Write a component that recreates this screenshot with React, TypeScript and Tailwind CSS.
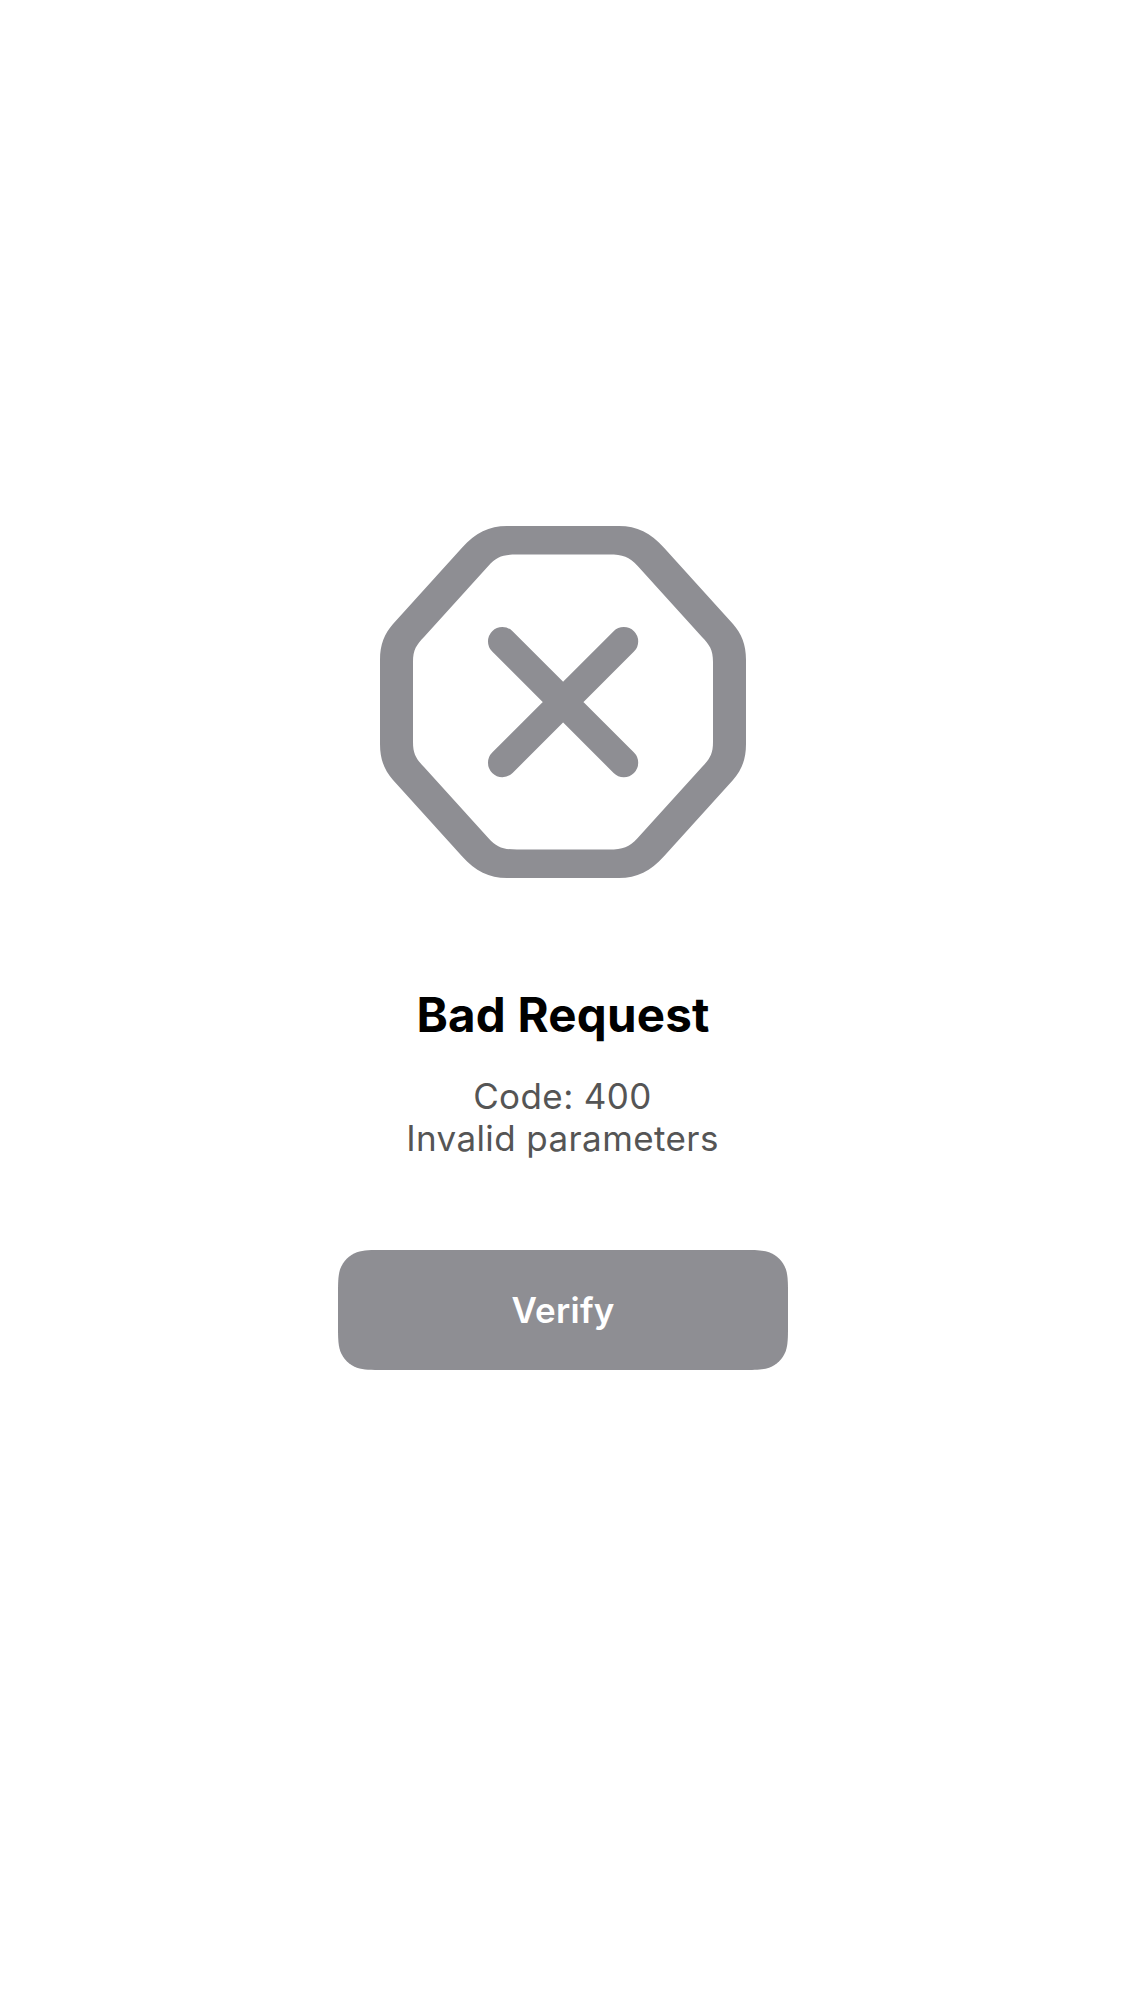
function ErrorIcon() {
  return (
    <svg width="366" height="352" viewBox="380 526 366 352" aria-hidden="true">
      <path
        fill="#8e8e93"
        fillRule="evenodd"
        d="M507 526H619C637 526 650.5 532.8 664 547.7L733 624C741.5 634 746 644 746 660V744C746 760 741.5 770 733 780L664 856.3C650.5 871.2 637 878 619 878H507C489 878 475.5 871.2 462 856.3L393 780C384.5 770 380 760 380 744V660C380 644 384.5 634 393 624L462 547.7C475.5 532.8 489 526 507 526ZM517 554.5C503 554.5 497 556.5 488.3 566L424 637C416.5 645 413 649.5 413 662V742C413 754.5 416.5 759 424 767L488.3 838C497 847.5 503 849.5 517 849.5H609C623 849.5 629 847.5 637.7 838L702 767C709.5 759 713 754.5 713 742V662C713 649.5 709.5 645 702 637L637.7 566C629 556.5 623 554.5 609 554.5Z"
      />
      <path d="M502.4 641.4L623.8 762.8M623.8 641.4L502.4 762.8" fill="none" stroke="#8e8e93" strokeWidth="28.8" strokeLinecap="round" />
    </svg>
  );
}

export default function App() {
  return (
    <main className="flex h-[2001px] w-full flex-col items-center bg-white pt-[526px] pl-px font-['Inter',sans-serif]">
      <ErrorIcon />
      <h1 className="mt-[108px] text-[47.5px] leading-[58px] font-bold tracking-[0.2px] text-black">Bad Request</h1>
      <p className="mt-[31px] pr-px text-center text-[35px] leading-[42px] tracking-[0.4px] text-[#555555]">
        Code: 400
        <br />
        Invalid parameters
      </p>
      <button className="mt-[91px] flex h-[120px] w-[450px] items-center justify-center bg-[#8e8e93] text-[35px] font-semibold tracking-[0.25px] text-white [clip-path:path('M45.9,0H404.1C417.4,0,424,0,431.1,2.2C438.8,5.1,444.9,11.2,447.8,18.9C450,26,450,32.7,450,45.9V74.1C450,87.3,450,94,447.8,101.1C444.9,108.8,438.8,114.9,431.1,117.8C424,120,417.4,120,404.1,120H45.9C32.6,120,26,120,18.9,117.8C11.2,114.9,5.1,108.8,2.2,101.1C0,94,0,87.3,0,74.1V45.9C0,32.7,0,26,2.2,18.9C5.1,11.2,11.2,5.1,18.9,2.2C26,0,32.6,0,45.9,0Z')]">
        Verify
      </button>
    </main>
  );
}
